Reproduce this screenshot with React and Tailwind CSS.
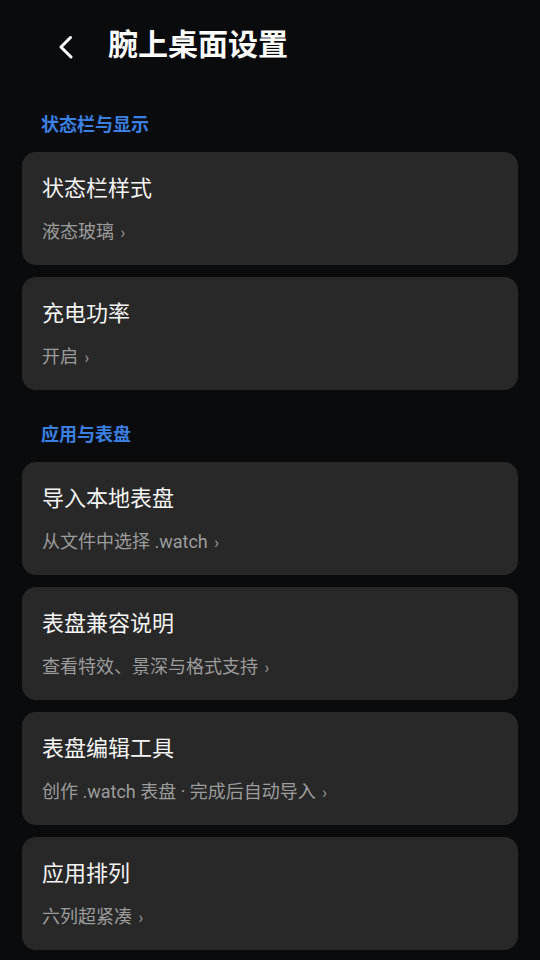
const SECTIONS = [
  {
    label: "状态栏与显示",
    items: [
      { title: "状态栏样式", sub: "液态玻璃" },
      { title: "充电功率", sub: "开启" },
    ],
  },
  {
    label: "应用与表盘",
    items: [
      { title: "导入本地表盘", sub: "从文件中选择 .watch" },
      { title: "表盘兼容说明", sub: "查看特效、景深与格式支持" },
      { title: "表盘编辑工具", sub: "创作 .watch 表盘 · 完成后自动导入" },
      { title: "应用排列", sub: "六列超紧凑" },
    ],
  },
];

export default function App() {
  return (
    <div
      className="min-h-[960px] w-[540px] bg-[#0a0b0d] text-white overflow-hidden"
      style={{ fontFamily: 'Roboto, "Noto Sans CJK SC", sans-serif' }}
    >
      {/* header */}
      <div className="h-[90px] flex items-center">
        <div className="w-[108px] pl-[57px] pt-[3px]">
          <svg width="18" height="24" viewBox="0 0 18 24" fill="none">
            <path d="M13.5 2.5 L4 12 L14 22" stroke="white" strokeWidth="3" strokeLinecap="round" strokeLinejoin="round" />
          </svg>
        </div>
        <h1 className="text-[30px] font-bold leading-10 text-white">腕上桌面设置</h1>
      </div>

      {SECTIONS.map((sec, i) => (
        <section key={sec.label} className={i === 0 ? "mt-[22px]" : "mt-8"}>
          <div className="h-6 pt-px px-[41px] text-[18px] font-bold leading-6 text-[#3a7fe2] mb-4">
            {sec.label}
          </div>
          <div className="flex flex-col gap-3 px-[22px]">
            {sec.items.map((it) => (
              <div key={it.title} className="h-[113px] flex flex-col rounded-[14px] bg-[#282828] px-5 pt-[22px]">
                <div className="h-[30px] text-[22px] leading-[30px] text-[#f5f5f5]">{it.title}</div>
                <div className="mt-4 h-6 text-[18px] leading-6 text-[#9c9c9c]">
                  {it.sub} <span className="ml-0.5 text-[16px]">›</span>
                </div>
              </div>
            ))}
          </div>
        </section>
      ))}
    </div>
  );
}
